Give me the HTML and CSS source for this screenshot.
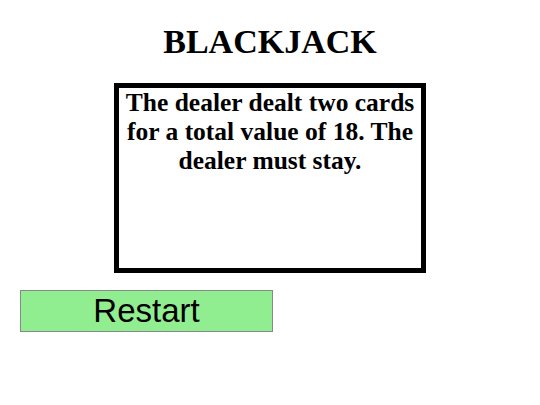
FILE: index.html
```html
<!DOCTYPE html>
<html lang="en">
<head>
    <meta charset="UTF-8">
    <title>Blackjack</title>
    <link rel="stylesheet" href="styles.css">
</head>
<body>
    <h1 class="title">BLACKJACK</h1>

    <!-- Mensajes del juego -->
    <div class="message-box">
        <p class="message">The dealer dealt two cards for a total value of 18. The dealer must stay.</p>
    </div>

    <button class="restart" type="button">Restart</button>
</body>
</html>
```

FILE: styles.css
```css
body {
    font-family: "Liberation Serif", "Times New Roman", serif;
    background-color: #ffffff;
    margin: 8px;
}

.title {
    font-size: 34px;
    line-height: 40px;
    text-align: center;
    margin: 14px 0 21px;
}

.message-box {
    width: 302px;
    height: 180px;
    margin: 0 auto;
    border: 5px solid #000000;
}

.message {
    font-size: 25.5px;
    line-height: 29px;
    font-weight: bold;
    text-align: center;
    margin: 0 4px;
}

.restart {
    display: block;
    width: 253px;
    height: 42px;
    margin: 17px 0 0 12px;
    background-color: #90ee90;
    border: 1px solid #888888;
    font-family: "Liberation Sans", Arial, sans-serif;
    font-size: 33px;
    color: #000000;
    padding: 0;
}
```
